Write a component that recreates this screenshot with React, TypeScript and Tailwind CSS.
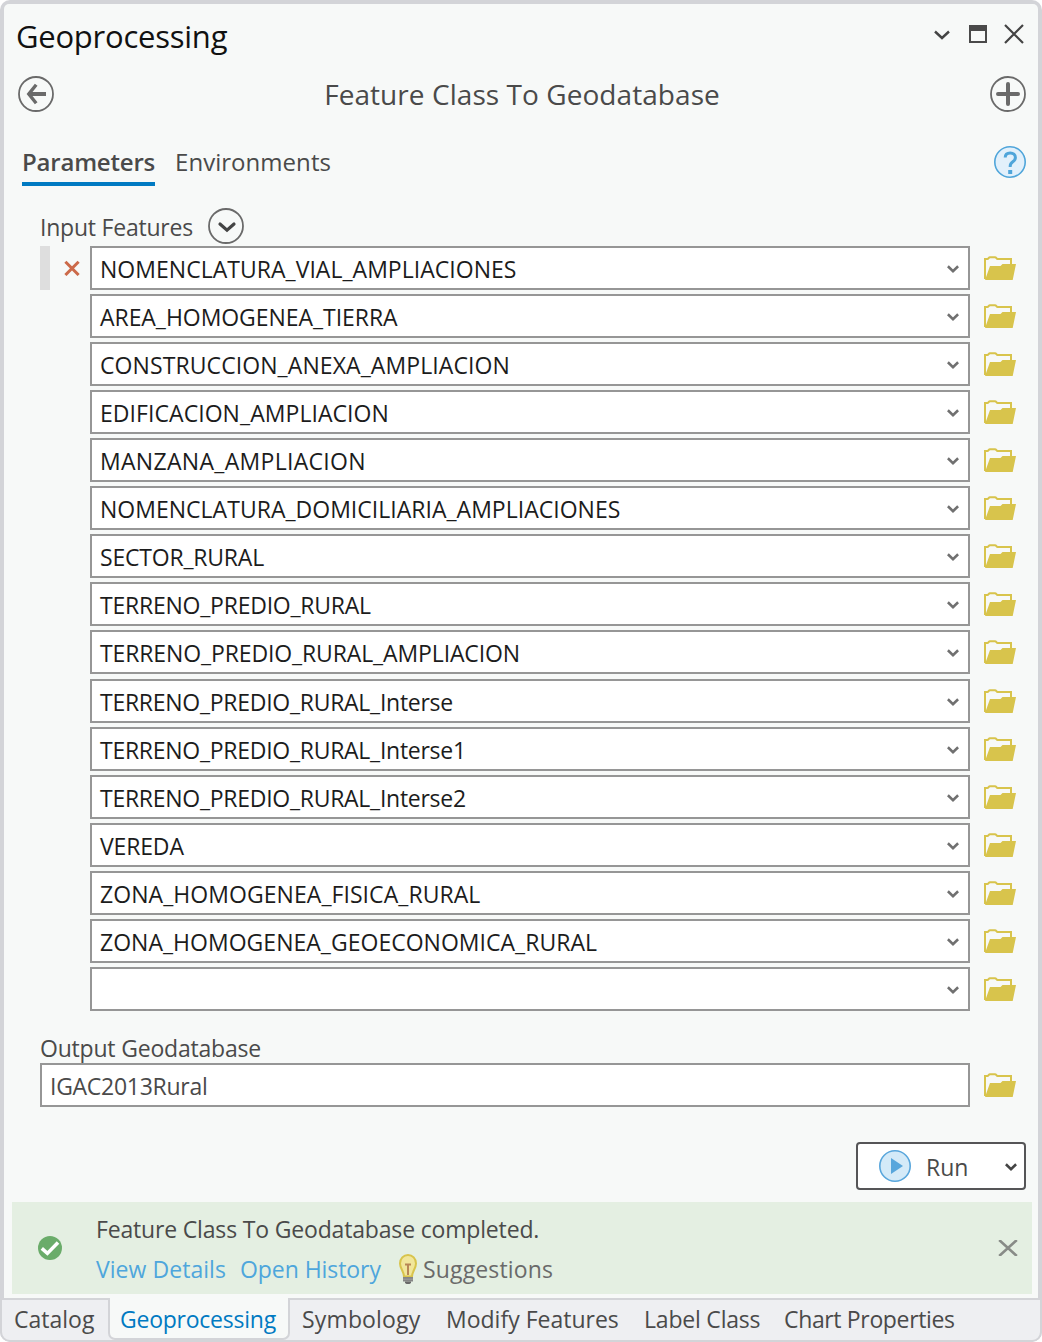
type Feature = { name: string; tracking: string };

const features: Feature[] = [
  { name: 'NOMENCLATURA_VIAL_AMPLIACIONES', tracking: 'tracking-[0.03px]' },
  { name: 'AREA_HOMOGENEA_TIERRA', tracking: 'tracking-[-0.05px]' },
  { name: 'CONSTRUCCION_ANEXA_AMPLIACION', tracking: 'tracking-[0.09px]' },
  { name: 'EDIFICACION_AMPLIACION', tracking: 'tracking-[0.06px]' },
  { name: 'MANZANA_AMPLIACION', tracking: 'tracking-[0.31px]' },
  { name: 'NOMENCLATURA_DOMICILIARIA_AMPLIACIONES', tracking: 'tracking-[0.02px]' },
  { name: 'SECTOR_RURAL', tracking: 'tracking-[-0.2px]' },
  { name: 'TERRENO_PREDIO_RURAL', tracking: 'tracking-[-0.23px]' },
  { name: 'TERRENO_PREDIO_RURAL_AMPLIACION', tracking: 'tracking-[-0.12px]' },
  { name: 'TERRENO_PREDIO_RURAL_Interse', tracking: 'tracking-[-0.27px]' },
  { name: 'TERRENO_PREDIO_RURAL_Interse1', tracking: 'tracking-[-0.27px]' },
  { name: 'TERRENO_PREDIO_RURAL_Interse2', tracking: 'tracking-[-0.27px]' },
  { name: 'VEREDA', tracking: 'tracking-[-0.15px]' },
  { name: 'ZONA_HOMOGENEA_FISICA_RURAL', tracking: 'tracking-[0.06px]' },
  { name: 'ZONA_HOMOGENEA_GEOECONOMICA_RURAL', tracking: 'tracking-[0.02px]' },
  { name: '', tracking: 'tracking-normal' },
];

function FolderIcon() {
  return (
    <svg width="32" height="24" viewBox="0 0 32 24" className="shrink-0">
      <path
        d="M1 23V3H3.5C4.5 3 4.7 1.2 6 1.2H11C12.3 1.2 12.5 3 13.5 3H27V9"
        fill="none"
        stroke="#d8c44c"
        strokeWidth="2"
      />
      <path d="M1 24L6 10H16.5L18.5 8H32L28.7 24Z" fill="#d8c44c" />
    </svg>
  );
}

function SmallChevron({ color }: { color: string }) {
  return (
    <svg width="12" height="8" viewBox="0 0 12 8" fill="none" className="shrink-0">
      <path d="M0.9 1.3L6 6.1L11.1 1.3" stroke={color} strokeWidth="2.6" />
    </svg>
  );
}

function FeatureRow({ feature, first, extraGap }: { feature: Feature; first: boolean; extraGap: boolean }) {
  return (
    <div className={extraGap ? 'mt-[5px] flex h-11 items-center' : first ? 'flex h-11 items-center' : 'mt-1 flex h-11 items-center'}>
      <div className="flex h-11 w-[50px] shrink-0 items-center">
        {first && (
          <>
            <div className="h-11 w-2.5 bg-[#dedede]" />
            <svg width="16" height="16" viewBox="0 0 16 16" className="ml-3.5">
              <path d="M1.4 1.8L14.6 15M14.6 1.8L1.4 15" stroke="#cc6a4a" strokeWidth="3" />
            </svg>
          </>
        )}
      </div>
      <div className="flex h-11 w-[880px] items-center justify-between border-2 border-[#969696] bg-white pr-[9px] pl-2">
        <span className={`pt-0.5 text-[#1c1c1c] ${feature.tracking}`}>{feature.name}</span>
        <div className="pt-0.5">
          <SmallChevron color="#707070" />
        </div>
      </div>
      <div className="ml-3.5">
        <FolderIcon />
      </div>
    </div>
  );
}

export default function App() {
  return (
    <div className="bg-white">
      <div className="flex h-[1342px] w-[1042px] flex-col overflow-hidden rounded-[10px] bg-[#d3d4d8] font-['Open_Sans',sans-serif] text-[23px] leading-8 whitespace-nowrap text-[#4a4a4a]">
        <main className="mx-1 mt-1 flex h-[1294px] shrink-0 flex-col rounded-t-[5px] bg-[#f7f9f8]">
          <header className="flex h-16 items-center justify-between pr-[14px] pl-3">
            <h1 className="text-[31px] leading-[42px] tracking-[-0.24px] text-[#111111]">Geoprocessing</h1>
            <div className="flex items-center pb-1">
              <svg width="16" height="10" viewBox="0 0 16 10" fill="none" className="mt-0.5">
                <path d="M1 1.5L8 8L15 1.5" stroke="#444" strokeWidth="2.4" />
              </svg>
              <div className="ml-[19px] h-[18px] w-[18px] border-2 border-t-[6px] border-[#4a4a4a]" />
              <svg width="20" height="20" viewBox="0 0 20 20" className="ml-[17px]">
                <path d="M1 1L19 19M19 1L1 19" stroke="#444" strokeWidth="2.2" />
              </svg>
            </div>
          </header>

          <section className="flex h-[52px] items-center justify-between pr-3 pl-3.5">
            <svg width="36" height="36" viewBox="0 0 36 36" fill="none" stroke="#6a6a6a">
              <circle cx="18" cy="18" r="17" strokeWidth="1.8" />
              <path d="M11 18H28" strokeWidth="4" />
              <path d="M18.2 8.8L10.8 18L18.2 27.2" strokeWidth="3.4" />
            </svg>
            <h2 className="text-[28px] leading-10 tracking-[0.06px]">Feature Class To Geodatabase</h2>
            <svg width="36" height="36" viewBox="0 0 36 36" fill="none" stroke="#6a6a6a">
              <circle cx="18" cy="18" r="17" strokeWidth="1.8" />
              <path d="M8 18H28M18 8V28" strokeWidth="4" strokeLinecap="round" />
            </svg>
          </section>

          <nav className="flex h-[66px] items-end justify-between pr-3 pl-[18px] text-2xl leading-8">
            <div className="flex">
              <div className="h-10 w-[133px] border-b-4 border-[#007ac2] font-semibold tracking-[-0.2px]">Parameters</div>
              <div className="ml-5 tracking-[0.04px]">Environments</div>
            </div>
            <svg width="32" height="32" viewBox="0 0 32 32" className="mb-2">
              <circle cx="16" cy="16" r="15.2" fill="#e2f0fb" stroke="#4fa5da" strokeWidth="1.6" />
              <path
                d="M11.2 11.6C11.2 8.6 13.2 7 16.2 7C19.3 7 21.4 8.7 21.4 11.4C21.4 13.4 20.4 14.6 18.8 15.7C17.2 16.8 16.2 17.8 16.2 20V21"
                fill="none"
                stroke="#4fa5da"
                strokeWidth="3"
              />
              <rect x="14.2" y="24" width="4" height="4" fill="#4fa5da" />
            </svg>
          </nav>

          <section className="mt-[22px] pl-9">
            <div className="flex h-[38px] items-start">
              <span className="mt-[3px] w-[153px] tracking-[-0.22px]">Input Features</span>
              <svg width="36" height="36" viewBox="0 0 36 36" fill="none" className="ml-[15px]">
                <circle cx="18" cy="18" r="17" stroke="#6a6a6a" strokeWidth="1.8" />
                <path d="M12 16L19 22.2L26 16" stroke="#444" strokeWidth="3.2" strokeLinecap="round" />
              </svg>
            </div>
            {features.map((feature, i) => (
              <FeatureRow key={i} feature={feature} first={i === 0} extraGap={i === 9} />
            ))}
          </section>

          <section className="mt-[21px] pl-9">
            <div className="tracking-[-0.2px]">Output Geodatabase</div>
            <div className="mt-[-1px] flex items-center">
              <div className="h-11 w-[930px] border-2 border-[#969696] bg-white pt-[5px] pl-2 tracking-[-0.28px]">IGAC2013Rural</div>
              <div className="ml-3.5">
                <FolderIcon />
              </div>
            </div>
          </section>

          <button className="mt-[35px] mr-3 flex h-12 w-[170px] shrink-0 items-center self-end rounded border-2 border-[#555557] bg-white pl-[21px]">
            <svg width="32" height="32" viewBox="0 0 32 32">
              <circle cx="16" cy="16" r="15.2" fill="#d4eaf8" stroke="#58a6dc" strokeWidth="1.6" />
              <path d="M12 8L24 16L12 24Z" fill="#58a6dc" />
            </svg>
            <span className="ml-[15px] w-[79px] pt-0.5 text-left">Run</span>
            <div className="pt-0.5">
              <SmallChevron color="#444444" />
            </div>
          </button>

          <section className="mt-3 mr-1.5 ml-2 flex h-[92px] shrink-0 bg-[#e4efe2]">
            <svg width="24" height="24" viewBox="0 0 24 24" className="mt-[34px] ml-[26px]">
              <circle cx="12" cy="12" r="12" fill="#6aac6a" />
              <path d="M3.8 12.4L9.4 17.4L20 6.6" fill="none" stroke="#fff" strokeWidth="3.5" />
            </svg>
            <div className="mt-[11px] ml-[34px]">
              <div className="tracking-[-0.17px]">Feature Class To Geodatabase completed.</div>
              <div className="mt-2 flex">
                <span className="w-36 tracking-[0.05px] text-[#4ea6dc]">View Details</span>
                <span className="w-[158px] tracking-[-0.06px] text-[#4ea6dc]">Open History</span>
                <svg width="20" height="32" viewBox="0 0 20 32">
                  <path
                    d="M6 23.5C6 18.5 2 15.5 2 10.5C2 5.6 5.5 2 10 2C14.5 2 18 5.6 18 10.5C18 15.5 14 18.5 14 23.5Z"
                    fill="#f1e69b"
                    stroke="#d8c44c"
                    strokeWidth="2"
                  />
                  <path d="M7 11.5H13M10 12V22" stroke="#b88655" strokeWidth="2" />
                  <path d="M5 24H15V28.5H5Z" fill="#858585" />
                  <path d="M7 28.5H13V30L11.5 31H8.5L7 30Z" fill="#686868" />
                  <path d="M5 26.2H15" stroke="#a5a5a5" strokeWidth="0.8" />
                </svg>
                <span className="ml-[5px] tracking-[0.15px] text-[#6a6a6a]">Suggestions</span>
              </div>
            </div>
            <svg width="20" height="16" viewBox="0 0 20 16" className="mt-[38px] mr-3.5 ml-auto">
              <path d="M1.2 0L18.8 16M18.8 0L1.2 16" stroke="#888b87" strokeWidth="2.6" />
            </svg>
          </section>
        </main>

        <footer className="flex h-11 shrink-0 rounded-b-[10px] border-2 border-[#d3d4d8] bg-[#eeeff2] leading-[39px]">
          <div className="w-[106px] pl-3">Catalog</div>
          <div className="-mt-0.5 h-[42px] w-[182px] rounded-b-[7px] border-2 border-t-0 border-[#d3d4d8] bg-[#f7f9f8] pt-0.5 pl-2.5 tracking-[-0.24px] text-[#007ac2]">
            Geoprocessing
          </div>
          <div className="w-36 pl-3 tracking-[0.15px]">Symbology</div>
          <div className="w-[198px] pl-3">Modify Features</div>
          <div className="w-[140px] pl-3 tracking-[-0.2px]">Label Class</div>
          <div className="pl-3 tracking-[-0.35px]">Chart Properties</div>
        </footer>
      </div>
    </div>
  );
}
